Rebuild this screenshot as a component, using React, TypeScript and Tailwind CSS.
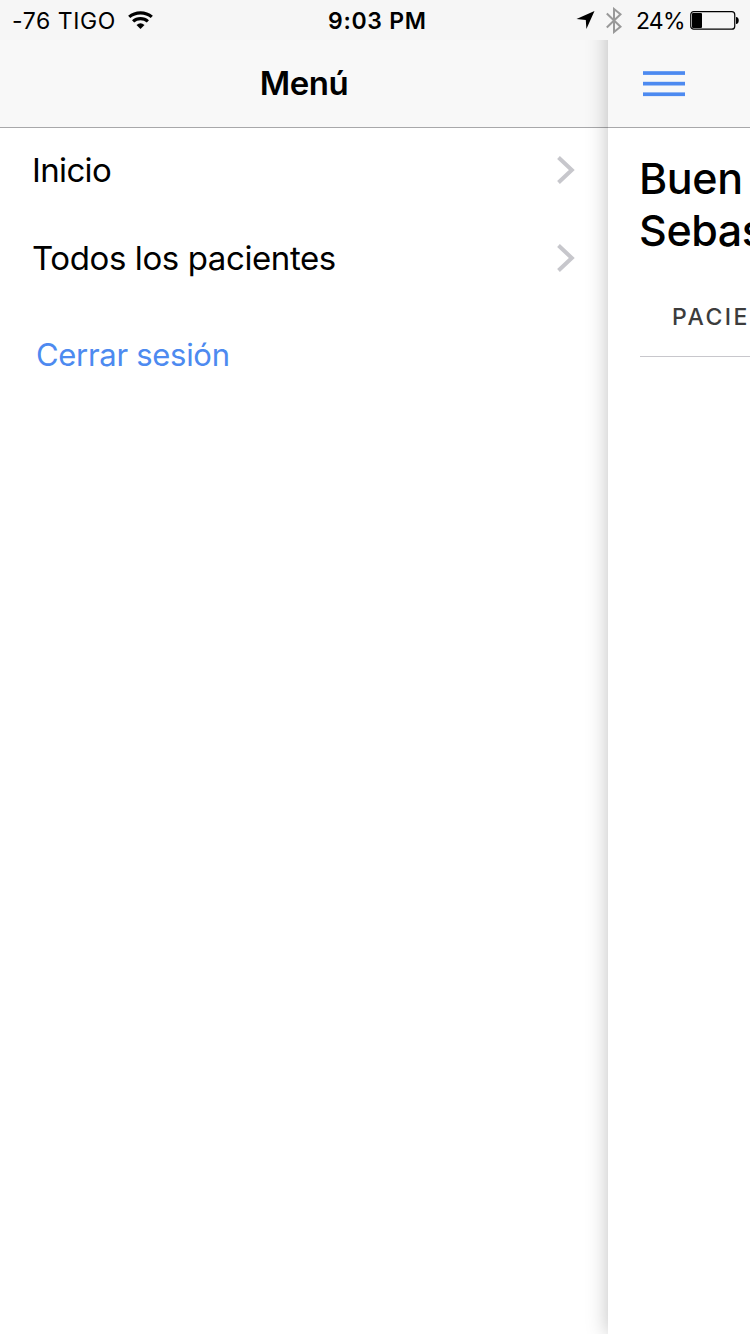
import React from "react";

function StatusBar() {
  return (
    <header className="relative z-10 flex h-10 shrink-0 items-center bg-[#f6f6f6] text-[23px] leading-10">
      <span className="ml-3 w-[104px] pt-0.5 whitespace-nowrap tracking-[0.6px]">-76 TIGO</span>
      <svg className="ml-3 h-[18px] w-[25px]" viewBox="0 0 25 18" fill="none" stroke="#000" strokeWidth="3.2">
        <path d="M1.2 5.9C7.5 0.4 17.5 0.4 23.8 5.9" />
        <path d="M5.1 10.4C9.3 6.6 15.7 6.6 19.9 10.4" />
        <path d="M8.5 14Q12.5 10.6 16.5 14L12.5 18Z" fill="#000" stroke="none" />
      </svg>
      <span className="ml-[175px] w-[100px] pt-0.5 whitespace-nowrap font-semibold tracking-[0.7px]">9:03 PM</span>
      <svg className="ml-[148px] h-[18px] w-[19px]" viewBox="0 0 19 18">
        <path d="M18.5 0L0.5 8L9.8 8.9L10.4 18Z" fill="#000" />
      </svg>
      <svg className="ml-[11px] h-[27px] w-4" viewBox="0 0 16 27" fill="none" stroke="#999" strokeWidth="2">
        <path d="M0.8 6.5L14.5 19.7L8 25V2L14.5 7.3L0.8 20.5" />
      </svg>
      <span className="ml-[14px] w-[49px] pt-0.5 whitespace-nowrap tracking-[-0.8px]">24%</span>
      <svg className="ml-[5px] h-5 w-[50px]" viewBox="0 0 50 20">
        <rect x="0.75" y="1.65" width="44" height="17.5" rx="3" fill="none" stroke="#000" strokeWidth="1.2" />
        <rect x="2" y="3" width="10" height="15" rx="1" />
        <path d="M46 7C49.7 7 49.7 14 46 14Z" />
      </svg>
    </header>
  );
}

function Chevron() {
  return (
    <svg className="h-7 w-[18px]" viewBox="0 0 18 28" fill="none" stroke="#c7c7cc" strokeWidth="4">
      <path d="M1.5 1.5L14.8 14L1.5 26.5" />
    </svg>
  );
}

function MenuItem({ label, className }: { label: string; className: string }) {
  return (
    <a className="flex h-[88px] items-center justify-between pr-[33px] pl-8">
      <span className={className}>{label}</span>
      <Chevron />
    </a>
  );
}

export default function App() {
  return (
    <div className="flex h-[1334px] w-[750px] flex-col overflow-hidden bg-white font-['Inter',sans-serif] text-black">
      <StatusBar />
      <div className="flex min-h-0 flex-1">
        <aside className="flex w-[608px] shrink-0 flex-col">
          <div className="flex h-[88px] items-center justify-center border-b border-[#a8a8aa] bg-[#f8f8f8] pb-0.5">
            <h1 className="text-[33px] leading-10 font-semibold tracking-[-0.4px]">Menú</h1>
          </div>
          <nav className="-mt-0.5 flex flex-col">
            <MenuItem label="Inicio" className="pt-0.5 text-[33px] tracking-[-0.65px]" />
            <MenuItem label="Todos los pacientes" className="pt-0.5 text-[33px] tracking-[-0.4px]" />
            <a className="mt-[33px] ml-9 text-[31px] leading-[40px] tracking-[-0.3px] text-[#4d8af0]">Cerrar sesión</a>
          </nav>
        </aside>
        <main className="-mt-10 flex min-w-0 flex-1 flex-col bg-white pt-10 shadow-[0_0_20px_rgba(0,0,0,0.25)]">
          <div className="flex h-[88px] shrink-0 items-center border-b border-[#a8a8aa] bg-[#f8f8f8] pl-[35px]">
            <svg className="h-[26px] w-[42px]" viewBox="0 0 42 26" fill="#4d8af0">
              <rect y="0.2" width="42" height="3.7" />
              <rect y="10.8" width="42" height="3.7" />
              <rect y="21.4" width="42" height="3.7" />
            </svg>
          </div>
          <div className="flex flex-col overflow-hidden pl-8">
            <h2 className="-ml-px mt-6 text-[43px] leading-[52px] font-medium tracking-[-0.4px] whitespace-nowrap">
              Buen
              <br />
              Sebas
            </h2>
            <div className="mt-12 h-[53px] border-b border-[#c8c7cc]">
              <div className="pt-px pl-8 text-[23px] leading-6 font-medium tracking-[2.5px] whitespace-nowrap text-[#3c3c3c]">PACIE</div>
            </div>
          </div>
        </main>
      </div>
    </div>
  );
}
